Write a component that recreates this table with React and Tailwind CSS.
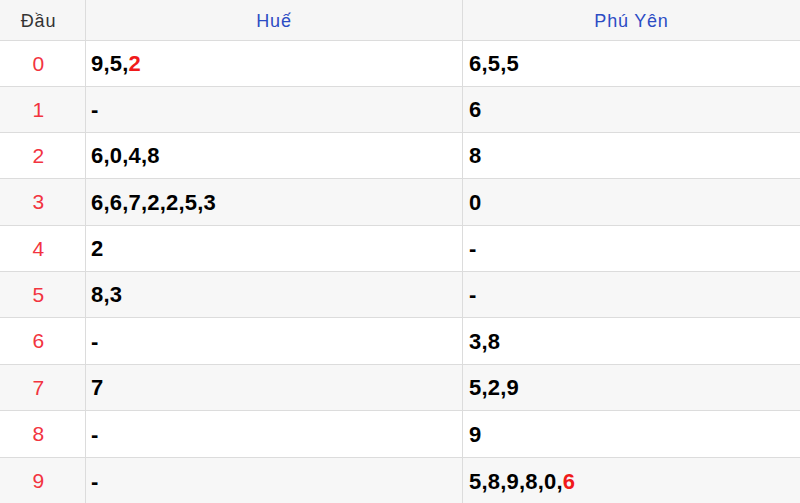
import React from "react";

const rows = [
  { d: "0", a: [["9,5,", false], ["2", true]], b: [["6,5,5", false]], h: "h-[46px]" },
  { d: "1", a: [["-", false]], b: [["6", false]], h: "h-[46px]" },
  { d: "2", a: [["6,0,4,8", false]], b: [["8", false]], h: "h-[46px]" },
  { d: "3", a: [["6,6,7,2,2,5,3", false]], b: [["0", false]], h: "h-[47px]" },
  { d: "4", a: [["2", false]], b: [["-", false]], h: "h-[46px]" },
  { d: "5", a: [["8,3", false]], b: [["-", false]], h: "h-[46px]" },
  { d: "6", a: [["-", false]], b: [["3,8", false]], h: "h-[47px]" },
  { d: "7", a: [["7", false]], b: [["5,2,9", false]], h: "h-[46px]" },
  { d: "8", a: [["-", false]], b: [["9", false]], h: "h-[47px]" },
  { d: "9", a: [["-", false]], b: [["5,8,9,8,0,", false], ["6", true]], h: "h-[47px]" },
];

function Nums({ parts }) {
  return (
    <span className="text-[22px] font-bold tracking-[0.2px] text-black">
      {parts.map(([t, red], i) =>
        red ? (
          <span key={i} className="text-[#f01a1a]">{t}</span>
        ) : (
          <span key={i}>{t}</span>
        )
      )}
    </span>
  );
}

export default function App() {
  return (
    <div className="w-[800px] h-[503px] overflow-hidden bg-white font-['Liberation_Sans',Arial,sans-serif]">
      <div className="grid grid-cols-[86px_377px_1fr] h-[41px] bg-[#f6f6f6] border-b border-[#dcdcdc] text-[18px] tracking-[0.8px]">
        <div className="flex items-center justify-center pr-2 pt-[2px] border-r border-[#dcdcdc] text-[#333]">Đầu</div>
        <div className="flex items-center justify-center pt-[2px] border-r border-[#dcdcdc] text-[#2c4cc4]">Huế</div>
        <div className="flex items-center justify-center pt-[2px] text-[#2c4cc4]">Phú Yên</div>
      </div>
      {rows.map((r, i) => (
        <div
          key={r.d}
          className={`grid grid-cols-[86px_377px_1fr] ${r.h} border-b border-[#dcdcdc] ${i % 2 === 1 ? "bg-[#f7f7f7]" : "bg-white"}`}
        >
          <div className="flex items-center justify-center pr-2 border-r border-[#dcdcdc] text-[21px] tracking-[0.5px] text-[#f2343f]">
            {r.d}
          </div>
          <div className="flex items-center pl-[5px] border-r border-[#dcdcdc]">
            <Nums parts={r.a} />
          </div>
          <div className="flex items-center pl-[6px]">
            <Nums parts={r.b} />
          </div>
        </div>
      ))}
    </div>
  );
}
